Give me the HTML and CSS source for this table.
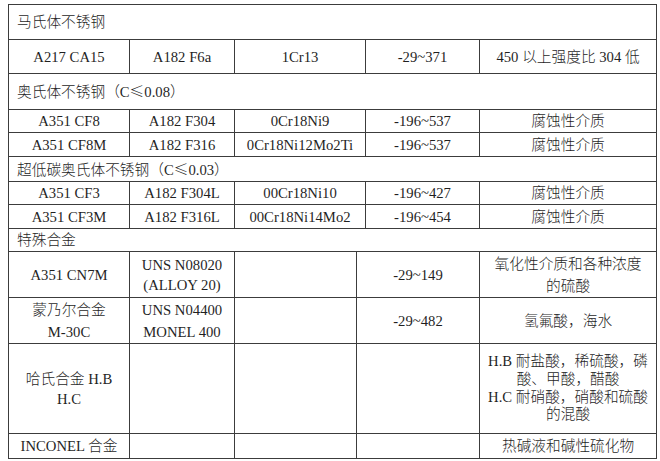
FILE: index.html
```html
<!DOCTYPE html>
<html lang="zh">
<head>
<meta charset="utf-8">
<title>阀门材料</title>
<link rel="stylesheet" href="styles.css">
</head>
<body>
<table class="spec">
  <colgroup>
    <col class="w1"><col class="w2"><col class="w3"><col class="w4"><col class="w5"><col class="w6">
  </colgroup>
  <tr class="r35"><td colspan="6" class="sec">马氏体不锈钢</td></tr>
  <tr class="r34"><td>A217 CA15</td><td>A182 F6a</td><td colspan="2">1Cr13</td><td>-29~371</td><td>450 以上强度比 304 低</td></tr>
  <tr class="r36"><td colspan="6" class="sec">奥氏体不锈钢（C<span class="cjk">≤</span>0.08）</td></tr>
  <tr class="r23"><td>A351 CF8</td><td>A182 F304</td><td colspan="2">0Cr18Ni9</td><td>-196~537</td><td>腐蚀性介质</td></tr>
  <tr class="r24"><td>A351 CF8M</td><td>A182 F316</td><td colspan="2">0Cr18Ni12Mo2Ti</td><td>-196~537</td><td>腐蚀性介质</td></tr>
  <tr class="r25"><td colspan="6" class="sec">超低碳奥氏体不锈钢（C<span class="cjk">≤</span>0.03）</td></tr>
  <tr class="r23"><td>A351 CF3</td><td>A182 F304L</td><td colspan="2">00Cr18Ni10</td><td>-196~427</td><td>腐蚀性介质</td></tr>
  <tr class="r24"><td>A351 CF3M</td><td>A182 F316L</td><td colspan="2">00Cr18Ni14Mo2</td><td>-196~454</td><td>腐蚀性介质</td></tr>
  <tr class="r23"><td colspan="6" class="sec">特殊合金</td></tr>
  <tr class="r46 lh20"><td>A351 CN7M</td><td>UNS N08020<br>(ALLOY 20)</td><td></td><td colspan="2">-29~149</td><td class="lh22">氧化性介质和各种浓度<br>的硫酸</td></tr>
  <tr class="r46 lh22"><td>蒙乃尔合金<br>M-30C</td><td>UNS N04400<br>MONEL 400</td><td></td><td colspan="2">-29~482</td><td>氢氟酸，海水</td></tr>
  <tr class="r90"><td class="lh20">哈氏合金 H.B<br>H.C</td><td></td><td></td><td colspan="2"></td><td class="lh18">H.B 耐盐酸，稀硫酸，磷<br>酸、甲酸，醋酸<br>H.C 耐硝酸，硝酸和硫酸<br>的混酸</td></tr>
  <tr class="r25"><td>INCONEL 合金</td><td></td><td></td><td colspan="2"></td><td>热碱液和碱性硫化物</td></tr>
</table>
</body>
</html>
```

FILE: styles.css
```css
html, body {
  margin: 0;
  padding: 0;
  background: #ffffff;
}

body {
  font-family: "Liberation Serif", "Noto Sans CJK SC", serif;
  font-size: 14.7px;
  font-weight: 300;
  color: #1f1f1f;
}

.spec {
  border-collapse: collapse;
  table-layout: fixed;
  width: 649px;
  margin: 4px 0 0 8px;
}

.spec td {
  border: 1px solid #3c3c3c;
  padding: 0 4px;
  text-align: center;
  vertical-align: middle;
  white-space: nowrap;
  line-height: 18px;
}

.spec td.sec {
  text-align: left;
  padding-left: 8px;
}

.cjk {
  font-family: "Noto Sans CJK SC", sans-serif;
}

.w1 { width: 121px; }
.w2 { width: 105px; }
.w3 { width: 122px; }
.w4 { width: 9px; }
.w5 { width: 114px; }
.w6 { width: 177px; }

.r23 { height: 23px; }
.r24 { height: 24px; }
.r25 { height: 25px; }
.r34 { height: 34px; }
.r35 { height: 35px; }
.r36 { height: 36px; }
.r46 { height: 46px; }
.r90 { height: 90px; }

.lh20 td { line-height: 20px; }
.lh22 td { line-height: 22px; }
.spec td.lh20 { line-height: 20px; }
.spec td.lh22 { line-height: 22px; }
.spec td.lh18 { line-height: 17.7px; }
```
